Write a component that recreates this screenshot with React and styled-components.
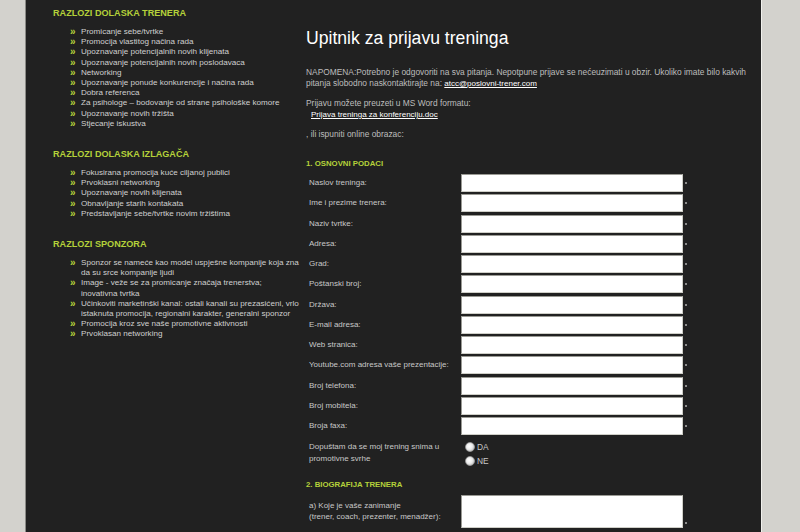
import React from "react";
import styled, { createGlobalStyle } from "styled-components";

const GlobalStyle = createGlobalStyle`
  html, body {
    margin: 0;
    padding: 0;
    background: #d3d2cd;
    font-family: "Liberation Sans", Arial, sans-serif;
  }
`;

const Page = styled.div`
  display: flex;
  height: 532px;
  overflow: hidden;
`;

const Panel = styled.div`
  margin-left: 25px;
  width: 735px;
  background: #212121;
  border-left: 1px solid #8a8a86;
  border-right: 1px solid #f0f0ec;
  display: flex;
`;

const LeftCol = styled.div`
  width: 253px;
  padding: 7px 0 0 27px;
  flex-shrink: 0;
`;

const RightCol = styled.div`
  flex: 1;
  padding: 27px 0 0 0;
`;

const SideHeading = styled.h3`
  margin: ${(p) => (p.first ? "0" : "19px")} 0 8px 0;
  color: #b5d13a;
  font-size: 9.1px;
  line-height: 12px;
  font-weight: bold;
  font-family: "Liberation Sans", Arial, sans-serif;
`;

const List = styled.ul`
  list-style: none;
  margin: 0;
  padding: 0 0 0 17px;
`;

const Item = styled.li`
  display: flex;
  color: #d0d0d0;
  font-size: 8.1px;
  line-height: 10.2px;
  white-space: nowrap;
`;

const Bullet = styled.span`
  width: 11px;
  flex-shrink: 0;
  color: #b5d13a;
  font-weight: bold;
  font-size: 10px;
  line-height: 10px;
`;

const Title = styled.h1`
  margin: 0 0 18px 0;
  color: #ffffff;
  font-weight: normal;
  font-size: 17.6px;
  line-height: 22px;
  font-family: "Liberation Sans", Arial, sans-serif;
`;

const Para = styled.p`
  margin: 0 0 9px 0;
  color: #bdbdbd;
  font-size: 8.4px;
  line-height: 11px;
`;

const Link = styled.a`
  color: #ffffff;
  text-decoration: underline;
  font-size: ${(p) => p.size || 8.4}px;
  margin-left: ${(p) => p.indent || 0}px;
`;

const SectionHeading = styled.h4`
  margin: ${(p) => p.top ?? 18}px 0 5px 0;
  color: #b5d13a;
  font-size: 7.8px;
  line-height: 11px;
  font-weight: bold;
`;

const Form = styled.div`
  display: grid;
  grid-template-columns: 152px 224px;
  row-gap: 2.25px;
  padding-left: 3px;
`;

const Label = styled.label`
  color: #c8c8c8;
  font-size: 8px;
  line-height: 12px;
  display: flex;
  align-items: center;
  min-height: 18px;
`;

const Field = styled.div`
  position: relative;
  width: 222px;
  height: ${(p) => p.h || 18}px;
  &::after {
    content: "";
    position: absolute;
    right: -4px;
    top: ${(p) => (p.h ? p.h - 6 : 8)}px;
    width: 2px;
    height: 2px;
    background: #8c8c8c;
  }
`;

const Input = styled.div`
  box-sizing: border-box;
  width: 100%;
  height: 100%;
  background: #ffffff;
  border: 1px solid #cfcfc8;
  border-top-color: #9a9a94;
  border-left-color: #9a9a94;
`;

const RadioGroup = styled.div`
  display: flex;
  flex-direction: column;
  padding: 5px 0 0 4px;
  gap: 4px;
`;

const RadioRow = styled.div`
  display: flex;
  align-items: center;
  gap: 2px;
  color: #c8c8c8;
  font-size: 8.4px;
  height: 10px;
`;

const Radio = styled.span`
  width: 10px;
  height: 10px;
  border-radius: 50%;
  background: radial-gradient(circle at 40% 40%, #ffffff 0%, #ececec 45%, #a8a8a8 100%);
  border: 1px solid #9a9a9a;
  box-sizing: border-box;
`;

const ConsentLabel = styled(Label)`
  align-items: flex-start;
  padding-top: 4px;
  line-height: 12px;
`;

const TextLabel = styled(Label)`
  align-items: flex-start;
  padding-top: 5px;
  line-height: 11px;
`;

const sidebar = [
  {
    title: "RAZLOZI DOLASKA TRENERA",
    items: [
      "Promicanje sebe/tvrtke",
      "Promocija vlastitog načina rada",
      "Upoznavanje potencijalnih novih klijenata",
      "Upoznavanje potencijalnih novih poslodavaca",
      "Networking",
      "Upoznavanje ponude konkurencije i načina rada",
      "Dobra referenca",
      "Za psihologe – bodovanje od strane psihološke komore",
      "Upoznavanje novih tržišta",
      "Stjecanje iskustva",
    ],
  },
  {
    title: "RAZLOZI DOLASKA IZLAGAČA",
    items: [
      "Fokusirana promocija kuće ciljanoj publici",
      "Prvoklasni networking",
      "Upoznavanje novih klijenata",
      "Obnavljanje starih kontakata",
      "Predstavljanje sebe/tvrtke novim tržištima",
    ],
  },
  {
    title: "RAZLOZI SPONZORA",
    items: [
      ["Sponzor se nameće kao model uspješne kompanije koja zna", "da su srce kompanije ljudi"],
      ["Image - veže se za promicanje značaja trenerstva;", "inovativna tvrtka"],
      ["Učinkoviti marketinški kanal: ostali kanali su prezasićeni, vrlo", "istaknuta promocija, regionalni karakter, generalni sponzor"],
      "Promocija kroz sve naše promotivne aktivnosti",
      "Prvoklasan networking",
    ],
  },
];

const fields = [
  "Naslov treninga:",
  "Ime i prezime trenera:",
  "Naziv tvrtke:",
  "Adresa:",
  "Grad:",
  "Poštanski broj:",
  "Država:",
  "E-mail adresa:",
  "Web stranica:",
  "Youtube.com adresa vaše prezentacije:",
  "Broj telefona:",
  "Broj mobitela:",
  "Broja faxa:",
];

function App() {
  return (
    <>
      <GlobalStyle />
      <Page>
        <Panel>
          <LeftCol>
            {sidebar.map((s, i) => (
              <div key={s.title}>
                <SideHeading first={i === 0}>{s.title}</SideHeading>
                <List>
                  {s.items.map((it, j) => (
                    <Item key={j}>
                      <Bullet>»</Bullet>
                      <span>
                        {Array.isArray(it) ? (
                          <>
                            {it[0]}
                            <br />
                            {it[1]}
                          </>
                        ) : (
                          it
                        )}
                      </span>
                    </Item>
                  ))}
                </List>
              </div>
            ))}
          </LeftCol>
          <RightCol>
            <Title>Upitnik za prijavu treninga</Title>
            <Para>
              NAPOMENA:Potrebno je odgovoriti na sva pitanja. Nepotpune prijave se nećeuzimati u obzir. Ukoliko imate bilo kakvih
              <br />
              pitanja slobodno naskontaktirajte na: <Link size={8}>atcc@poslovni-trener.com </Link>
            </Para>
            <Para>
              Prijavu možete preuzeti u MS Word formatu:
              <br />
              <Link indent={5} size={8}>Prijava treninga za konferenciju.doc</Link>
            </Para>
            <Para>, ili ispuniti online obrazac:</Para>
            <SectionHeading>1. OSNOVNI PODACI</SectionHeading>
            <Form>
              {fields.map((f) => (
                <React.Fragment key={f}>
                  <Label>{f}</Label>
                  <Field>
                    <Input />
                  </Field>
                </React.Fragment>
              ))}
              <ConsentLabel>
                Dopuštam da se moj trening snima u
                <br />
                promotivne svrhe
              </ConsentLabel>
              <RadioGroup>
                <RadioRow>
                  <Radio />
                  DA
                </RadioRow>
                <RadioRow>
                  <Radio />
                  NE
                </RadioRow>
              </RadioGroup>
            </Form>
            <SectionHeading top={13}>2. BIOGRAFIJA TRENERA</SectionHeading>
            <Form>
              <TextLabel>
                a) Koje je vaše zanimanje
                <br />
                (trener, coach, prezenter, menadžer):
              </TextLabel>
              <Field h={33}>
                <Input />
              </Field>
            </Form>
          </RightCol>
        </Panel>
      </Page>
    </>
  );
}

export default App;
